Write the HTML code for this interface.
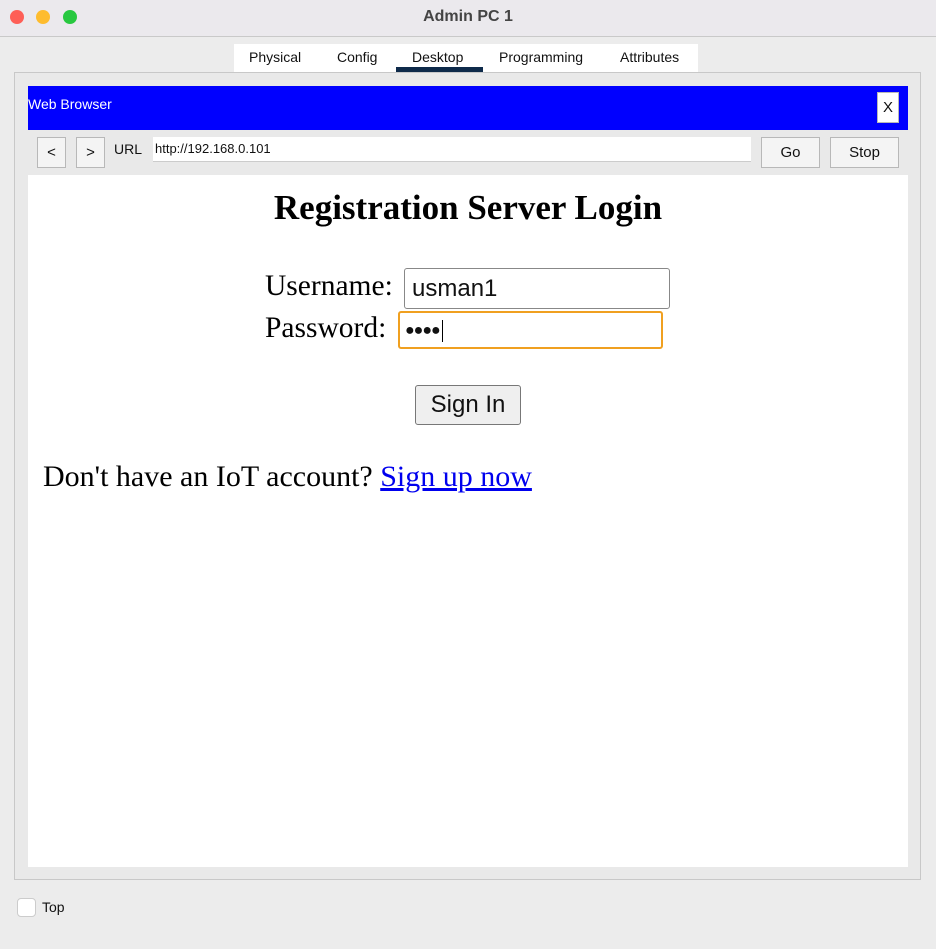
<!DOCTYPE html>
<html><head><style>
*{margin:0;padding:0;box-sizing:border-box}
body{width:936px;height:949px;background:#ececec;position:relative;overflow:hidden;font-family:"Liberation Sans",sans-serif}
.a{position:absolute}
.btn{position:absolute;background:#f4f4f4;border:1px solid #b8b8b8;font-size:15px;display:flex;align-items:center;justify-content:center;color:#111}
.serif{font-family:"Liberation Serif",serif;color:#000}
</style></head><body>
<div class="a" style="left:0;top:0;width:936px;height:37px;background:#ebe9ed;border-bottom:1px solid #c9c9c9"></div>
<div class="a" style="left:10px;top:10px;width:14px;height:14px;border-radius:50%;background:#fe5f57"></div>
<div class="a" style="left:36px;top:10px;width:14px;height:14px;border-radius:50%;background:#febc2e"></div>
<div class="a" style="left:63px;top:10px;width:14px;height:14px;border-radius:50%;background:#28c840"></div>
<div class="a" style="left:0;width:936px;top:8px;text-align:center;font-size:16px;font-weight:bold;color:#444">Admin PC 1</div>
<div class="a" style="left:234px;top:44px;width:464px;height:28px;background:#fff"></div>
<div class="a" style="top:49px;left:249px;font-size:14px;color:#111">Physical</div>
<div class="a" style="top:49px;left:337px;font-size:14px;color:#111">Config</div>
<div class="a" style="top:49px;left:412px;font-size:14px;color:#111">Desktop</div>
<div class="a" style="top:49px;left:499px;font-size:14px;color:#111">Programming</div>
<div class="a" style="top:49px;left:620px;font-size:14px;color:#111">Attributes</div>
<div class="a" style="left:396px;top:67px;width:87px;height:5px;background:#0e2a4a"></div>
<div class="a" style="left:14px;top:72px;width:907px;height:808px;background:#e9e9e9;border:1px solid #c8c8c8"></div>
<div class="a" style="left:28px;top:86px;width:880px;height:44px;background:#0000ff"></div>
<div class="a" style="left:28px;top:96px;color:#fff;font-size:14px">Web Browser</div>
<div class="btn" style="left:877px;top:92px;width:22px;height:31px;background:#fff">X</div>
<div class="btn" style="left:37px;top:137px;width:29px;height:31px">&lt;</div>
<div class="btn" style="left:76px;top:137px;width:29px;height:31px">&gt;</div>
<div class="a" style="left:114px;top:141px;font-size:14px;color:#111">URL</div>
<div class="a" style="left:153px;top:137px;width:598px;height:25px;background:#fff;border-bottom:1px solid #ccc;font-size:13px;padding:4px 2px;color:#111">http://192.168.0.101</div>
<div class="btn" style="left:761px;top:137px;width:59px;height:31px">Go</div>
<div class="btn" style="left:830px;top:137px;width:69px;height:31px">Stop</div>
<div class="a" style="left:28px;top:175px;width:880px;height:692px;background:#fff"></div>
<div class="a serif" style="left:28px;width:880px;top:188px;text-align:center;font-size:35px;font-weight:bold">Registration Server Login</div>
<div class="a serif" style="left:265px;top:270px;font-size:29.5px">Username:</div>
<div class="a" style="left:404px;top:268px;width:266px;height:41px;border:1px solid #888;border-radius:3px;background:#fff;font-size:24px;padding:6px 7px;color:#111">usman1</div>
<div class="a serif" style="left:265px;top:312px;font-size:29.5px">Password:</div>
<div class="a" style="left:398px;top:311px;width:265px;height:38px;border:2px solid #f0a020;border-radius:3px;background:#fff;font-size:16px;padding:7px 5px;color:#111;letter-spacing:-1px">●●●●<span style="display:inline-block;width:1px;height:22px;background:#000;vertical-align:middle;margin-left:2px"></span></div>
<div class="a" style="left:415px;top:385px;width:106px;height:40px;background:#efefef;border:1px solid #777;border-radius:3px;font-size:24px;text-align:center;line-height:38px;color:#111">Sign In</div>
<div class="a serif" style="left:43px;top:460px;font-size:30px">Don't have an IoT account? <span style="color:#0000ee;text-decoration:underline">Sign up now</span></div>
<div class="a" style="left:17px;top:898px;width:19px;height:19px;background:#fff;border:1px solid #ccc;border-radius:4px"></div>
<div class="a" style="left:42px;top:899px;font-size:14px;color:#111">Top</div>
</body></html>
